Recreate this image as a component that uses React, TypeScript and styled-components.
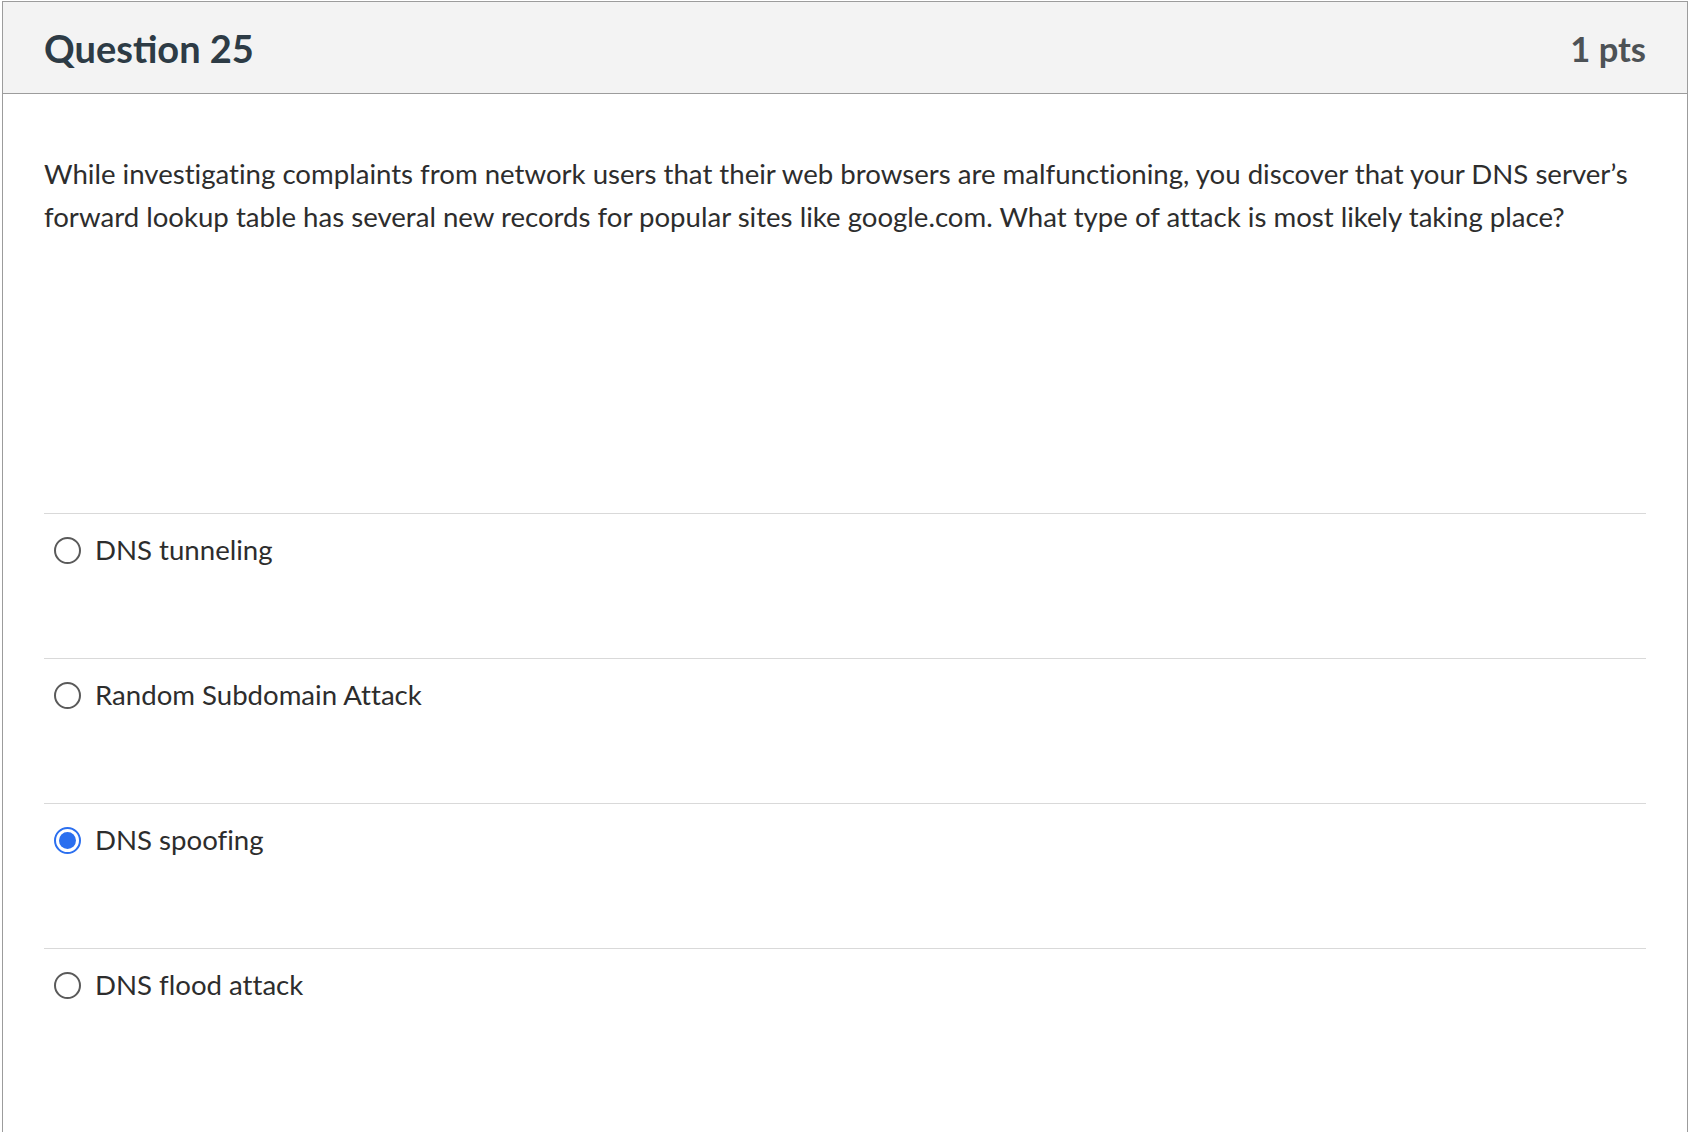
import React from "react";
import styled, { createGlobalStyle } from "styled-components";

const Global = createGlobalStyle`
  html, body { margin: 0; padding: 0; background: #ffffff; }
  body { font-family: Lato, "Open Sans", "Liberation Sans", sans-serif; }
`;

const Page = styled.div`
  padding: 1px 0 0 2px;
  height: 1131px;
  overflow: hidden;
`;

const Panel = styled.section`
  border: 1px solid #9c9c9c;
  border-bottom: none;
  min-height: 1200px;
  background: #ffffff;
`;

const Header = styled.header`
  height: 91px;
  background: #f3f3f3;
  border-bottom: 1px solid #9c9c9c;
  display: flex;
  align-items: center;
  justify-content: space-between;
  padding: 0 41px 0 41px;
`;

const Title = styled.h2`
  margin: 0;
  font-size: 38px;
  font-weight: 700;
  color: #2d3b45;
`;

const Points = styled.div`
  font-size: 34.5px;
  font-weight: 700;
  color: #4d5256;
  padding-top: 2px;
`;

const Body = styled.div`
  padding: 0 41px 0 41px;
`;

const QuestionText = styled.p`
  margin: 58px 0 0 0;
  font-size: 27.6px;
  line-height: 43px;
  color: #2d2d2d;
  font-variant-ligatures: none;
  min-height: 361px;
`;

const Answers = styled.div`
  display: flex;
  flex-direction: column;
`;

const AnswerRow = styled.label`
  display: flex;
  align-items: flex-start;
  gap: 14px;
  height: 145px;
  padding: 14px 0 0 10px;
  box-sizing: border-box;
  border-top: 1px solid #d9d9d9;
`;

const Radio = styled.span<{ $checked?: boolean }>`
  flex: none;
  width: 27px;
  height: 27px;
  margin-top: 9px;
  border-radius: 50%;
  box-sizing: border-box;
  border: ${(p) => (p.$checked ? "2.5px solid #2b6fef" : "2px solid #5a5a5a")};
  background: #ffffff;
  display: flex;
  align-items: center;
  justify-content: center;
  &::after {
    content: "";
    display: ${(p) => (p.$checked ? "block" : "none")};
    width: 17px;
    height: 17px;
    border-radius: 50%;
    background: #2b6fef;
  }
`;

const AnswerText = styled.span`
  font-size: 27.6px;
  line-height: 43px;
  color: #2d2d2d;
  font-variant-ligatures: none;
`;

const answers = [
  { text: "DNS tunneling", checked: false },
  { text: "Random Subdomain Attack", checked: false },
  { text: "DNS spoofing", checked: true },
  { text: "DNS flood attack", checked: false },
];

export default function App() {
  return (
    <>
      <Global />
      <Page>
        <Panel>
          <Header>
            <Title>Question 25</Title>
            <Points>1 pts</Points>
          </Header>
          <Body>
            <QuestionText>
              While investigating complaints from network users that their web browsers are
              malfunctioning, you discover that your DNS server’s forward lookup table has several
              new records for popular sites like google.com. What type of attack is most likely
              taking place?
            </QuestionText>
            <Answers>
              {answers.map((a) => (
                <AnswerRow key={a.text}>
                  <Radio $checked={a.checked} />
                  <AnswerText>{a.text}</AnswerText>
                </AnswerRow>
              ))}
            </Answers>
          </Body>
        </Panel>
      </Page>
    </>
  );
}
